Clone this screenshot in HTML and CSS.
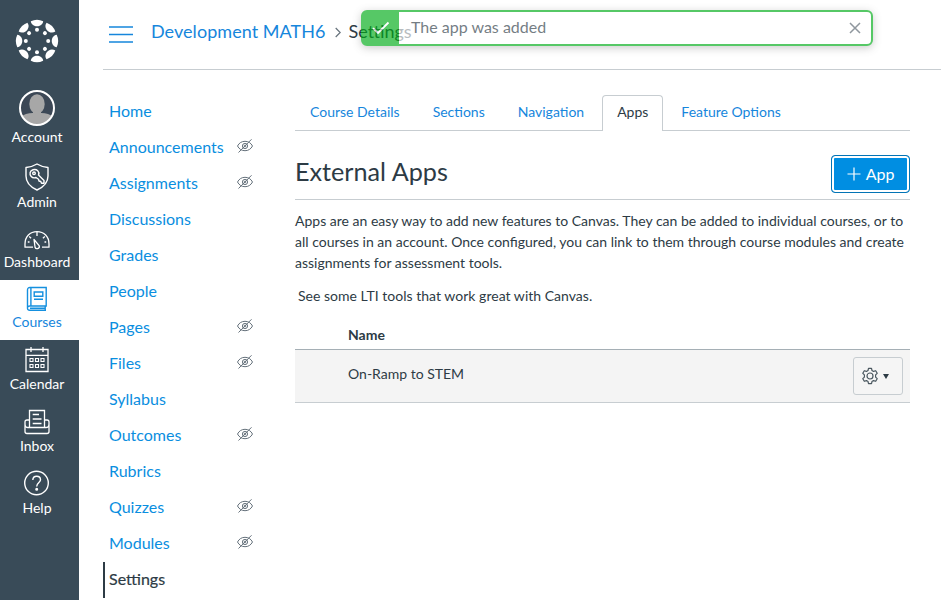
FILE: index.html
```html
<!DOCTYPE html>
<html lang="en">
<head>
<meta charset="utf-8">
<title>Development MATH6 Settings</title>
<link rel="stylesheet" href="styles.css">
</head>
<body>
<svg width="0" height="0" class="defs" aria-hidden="true">
  <symbol id="hidden-eye" viewBox="0 0 18 16"><g fill="none" stroke="#66727c" stroke-width="1"><path d="M1.5 8Q4 3.3 9 3.3T16.500 8Q14 12.700 9 12.700T1.500 8Z"/><circle cx="9" cy="8" r="2.600"/><circle cx="9" cy="8" r=".8"/><path d="M2.500 14.500 15.500 1.300"/></g></symbol>
</svg>
<div class="app">
  <nav class="global-nav">
    <a class="logo"><svg width="44" height="44" viewBox="-22 -22 44 44" fill="#fff">
      <defs><g id="spoke"><path d="M-6.200-19.700Q0-22.700 6.200-19.700C5.300-13.100-5.300-13.100-6.200-19.700Z"/><circle cy="-11.200" r="2"/></g></defs>
      <use href="#spoke"/><use href="#spoke" transform="rotate(45)"/><use href="#spoke" transform="rotate(90)"/><use href="#spoke" transform="rotate(135)"/><use href="#spoke" transform="rotate(180)"/><use href="#spoke" transform="rotate(225)"/><use href="#spoke" transform="rotate(270)"/><use href="#spoke" transform="rotate(315)"/></svg></a>
    <a class="item account"><svg width="36" height="36" viewBox="0 0 36 36"><defs><clipPath id="face"><circle cx="18" cy="18" r="17"/></clipPath></defs><circle cx="18" cy="18" r="17" fill="#3c4856"/><g clip-path="url(#face)" fill="#a7a7a7"><ellipse cx="18" cy="14" rx="7.700" ry="9.800"/><path d="M14 20h8v3q8 0 12 4v9H2v-9q4-4 12-4z"/></g><circle cx="18" cy="18" r="17" fill="none" stroke="#fff" stroke-width="2"/></svg><span>Account</span></a>
    <a class="item admin"><svg width="26" height="28" viewBox="0 0 26 28" fill="none" stroke="#fff" stroke-width="1.400" stroke-linejoin="round"><path d="M13 1Q18 4 24 4.500V13Q24 22 13 27Q2 22 2 13V4.500Q8 4 13 1Z"/><path d="M14.500 12 20 17.500V20.300H17.500L16.800 18.500 15 18 14.500 16.300 12 14.500Q9 15.500 7.200 13.500C5 11 6 7.500 9 6.700C13 5.800 15.800 8.500 14.500 12Z"/><circle cx="10" cy="10.300" r="1.300"/></svg><span>Admin</span></a>
    <a class="item"><svg width="26" height="21" viewBox="0 0 26 21" fill="none" stroke="#fff" stroke-width="1.300" stroke-linejoin="round"><path d="M9 17.200H1V14C1 6.500 6 1.700 13 1.700S25 6.500 25 14V17.200H18"/><path d="M13 2v4M5.200 6.500l1.900 1.700M20.800 6.500l-1.900 1.700M3.800 12h1.700M20.500 12h1.700M10 9.500l1.100 8q.6 1.500 2.500 1.100 2.200-.7 1.700-2.700Z"/></svg><span>Dashboard</span></a>
    <a class="item active"><svg width="22" height="26" viewBox="0 -1 22 26" fill="none" stroke="#1590df" stroke-width="1.400"><path d="M4 1.500H20.200V20H4Q1.500 20 1.500 22.200T4 24.300H20M1.500 22.500V4Q1.500 1.500 4 1.500M4.900 2V20M19.200 20v4M4 22.200H19M8.200 6H16.800V10.300H8.200ZM8 13.300H17"/></svg><span>Courses</span></a>
    <a class="item"><svg width="24" height="27" viewBox="0 0 24 27" fill="none" stroke="#fff" stroke-width="1.300"><path d="M1 3.500H23V25.500H1ZM1 9.300H23M6 1V6M18 1V6"/><path stroke-width="1.100" d="M5 12.500h3v3H5zM10.500 12.500h3v3h-3zM16 12.500h3v3h-3zM5 18.500h3v3H5zM10.500 18.500h3v3h-3zM16 18.500h3v3h-3z"/></svg><span>Calendar</span></a>
    <a class="item"><svg width="26" height="27" viewBox="0 -1 26 27" fill="none" stroke="#fff" stroke-width="1.300"><path d="M5.500 18.500V1.500H20.500V18.500M5 11H3Q1 11 1 13V22.500Q1 24.500 3 24.500H23Q25 24.500 25 22.500V13Q25 11 23 11H21M1 15Q1 18.500 4 18.500H22Q25 18.500 25 15M8.700 5.500H15M8.700 10H17.500M8.700 14.500H17.500"/></svg><span>Inbox</span></a>
    <a class="item"><svg width="26" height="28" viewBox="0 -1 26 28" fill="none" stroke="#fff" stroke-width="1.400"><circle cx="12.500" cy="13" r="11.800"/><path d="M8.800 10Q9 6.300 12.700 6.300T16.500 9.800C16.500 12.500 12.700 12.500 12.700 16.500"/><circle cx="12.700" cy="19.300" r=".8" fill="#fff"/></svg><span>Help</span></a>
  </nav>
  <div class="page">
    <header class="crumbs">
      <svg width="24" height="17" viewBox="0 0 24 17" stroke="#1686dc" stroke-width="1.500"><path d="M0 1H24M0 8.500H24M0 16H24"/></svg>
      <a class="course">Development MATH6</a>
      <svg class="chevron" width="6" height="11" viewBox="0 0 6 11" fill="none" stroke="#66727c" stroke-width="1.200"><path d="M.7 1 5.200 5.500.7 10"/></svg>
      <span>Settings</span>
    </header>
    <div class="body">
      <nav class="course-nav">
        <a>Home</a>
        <a>Announcements<svg><use href="#hidden-eye"/></svg></a>
        <a>Assignments<svg><use href="#hidden-eye"/></svg></a>
        <a>Discussions</a>
        <a>Grades</a>
        <a>People</a>
        <a>Pages<svg><use href="#hidden-eye"/></svg></a>
        <a>Files<svg><use href="#hidden-eye"/></svg></a>
        <a>Syllabus</a>
        <a>Outcomes<svg><use href="#hidden-eye"/></svg></a>
        <a>Rubrics</a>
        <a>Quizzes<svg><use href="#hidden-eye"/></svg></a>
        <a>Modules<svg><use href="#hidden-eye"/></svg></a>
        <a class="current">Settings</a>
      </nav>
      <main>
        <div class="tabs"><a>Course Details</a><a>Sections</a><a>Navigation</a><a class="selected">Apps</a><a>Feature Options</a></div>
        <div class="heading"><h2>External Apps</h2><button class="add"><svg width="14" height="14" viewBox="0 0 14 14" stroke="#fff" stroke-width="1.200"><path d="M7 .5V13.500M.5 7H13.500"/></svg><span>App</span></button></div>
        <p>Apps are an easy way to add new features to Canvas. They can be added to individual courses, or to<br>all courses in an account. Once configured, you can link to them through course modules and create<br>assignments for assessment tools.</p>
        <p class="see">See some LTI tools that work great with Canvas.</p>
        <div class="table">
          <div class="thead">Name</div>
          <div class="row"><span>On-Ramp to STEM</span><button class="gear"><svg width="18" height="18" viewBox="0 0 18 18" fill="none" stroke="#4b5860" stroke-width="1.200" stroke-linejoin="round"><path d="M7.500 1.300h3l.5 2.200 1.500.9 2.200-.7 1.500 2.600-1.600 1.600v2.200l1.600 1.600-1.500 2.600-2.200-.7-1.500.9-.5 2.200h-3L7 14.500l-1.500-.9-2.200.7-1.500-2.600 1.600-1.600V7.900L1.800 6.300l1.500-2.600 2.200.7L7 3.500Z"/><circle cx="9" cy="9" r="3"/></svg><i class="caret"></i></button></div>
        </div>
      </main>
    </div>
  </div>
  <div class="toast"><div class="tick"><svg width="18" height="14" viewBox="0 0 18 14" fill="none" stroke="#fff" stroke-width="1.800"><path d="M1 7.200 6 12 16.500 1.500"/></svg></div><span>The app was added</span><svg class="close" width="12" height="12" viewBox="0 0 12 12" stroke="#56626d" stroke-width="1.500"><path d="M1 1 11 11M11 1 1 11"/></svg></div>
</div>
</body>
</html>
```
FILE: styles.css
```css
* { box-sizing: border-box; }
body { margin: 0; font-family: Lato, "Liberation Sans", sans-serif; font-size: 14px; color: #2d3b45; background: #fff; overflow: hidden; }
.defs { position: absolute; }
.app { display: flex; height: 600px; overflow: hidden; }
.global-nav { width: 79px; flex: none; background: #394b58; color: #fff; display: flex; flex-direction: column; }
.logo { height: 80px; padding: 19px 0 0 15px; }
.item { height: 62px; padding: 0 5px 9px 0; display: flex; flex-direction: column; align-items: center; justify-content: flex-end; gap: 2px; line-height: 18px; flex: none; }
.account { height: 75px; }
.admin { height: 65px; }
.admin + .item, .active { height: 60px; }
.active { background: #fff; color: #1686dc; }
.page { flex: 1; min-width: 0; padding-left: 24px; }
.crumbs { height: 70px; border-bottom: 1px solid #c7cdd1; display: flex; align-items: center; padding: 0 0 7px 6px; font-size: 18px; }
.crumbs > svg:first-child { margin-top: 6px; }
.course { color: #1686dc; margin-left: 18px; letter-spacing: .05px; }
.chevron { margin: 3px 8px 0 9px; }
.body { display: flex; }
.course-nav { width: 192px; flex: none; padding-top: 24px; }
.course-nav a { display: flex; align-items: center; justify-content: space-between; height: 36px; padding: 0 41px 4px 6px; font-size: 16px; color: #0a8ee0; }
.course-nav svg { width: 18px; height: 16px; }
.course-nav .current { color: #2d3b45; border-left: 2px solid #2d3b45; padding-left: 4px; -webkit-text-stroke: .2px #2d3b45; }
main { width: 615px; padding-top: 25px; }
.tabs { height: 36px; display: flex; border-bottom: 1px solid #c7cdd1; color: #1686dc; }
.tabs a { height: 36px; padding: 0 15px; line-height: 34px; margin-right: 3px; border: 0 solid #c7cdd1; white-space: nowrap; }
.tabs .selected { color: #2d3b45; background: #fff; border-width: 1px 1px 0; border-radius: 4px 4px 0 0; padding: 0 14px; line-height: 32px; }
.heading { height: 69px; border-bottom: 1px solid #c7cdd1; display: flex; justify-content: space-between; padding-top: 24px; }
h2 { margin: 0; font-weight: 400; font-size: 25.2px; line-height: 32px; }
button { font: inherit; color: inherit; margin: 0; }
.add { width: 79px; height: 38px; border: 1px solid #0374b5; border-radius: 4px; background: #008ee2; box-shadow: inset 0 0 0 2px #fff; color: #fff; font-size: 16px; display: flex; align-items: center; justify-content: center; gap: 5px; padding: 0; }
.add span { padding-bottom: 2px; }
p { margin: 10px 0 12px; line-height: 21px; white-space: nowrap; }
.see { margin: 0; padding-left: 3px; letter-spacing: .02px; }
.thead { height: 44px; padding: 17px 0 0 53px; font-weight: 700; line-height: 24px; border-bottom: 1px solid #a5afb5; }
.row { height: 53px; background: #f4f4f4; border-bottom: 1px solid #c7cdd1; display: flex; justify-content: space-between; padding: 7px 7px 0 53px; line-height: 34px; }
.gear { width: 50px; height: 38px; background: #f5f5f5; border: 1px solid #c7cdd1; border-radius: 3px; padding: 0 6px 0 0; display: flex; align-items: center; justify-content: center; gap: 4px; }
.caret { border: 3.5px solid transparent; border-top: 5px solid #2d3b45; border-bottom: 0; }
.toast { position: absolute; left: 361px; top: 10px; width: 512px; height: 36px; border: 2px solid #00ac18; border-radius: 6px; background: #fff; opacity: .66; display: flex; align-items: center; font-size: 16px; box-shadow: 0 2px 8px rgba(0,0,0,.3); }
.tick { width: 36px; height: 32px; background: #00ac18; display: flex; align-items: center; justify-content: center; }
.toast span { margin-left: 12px; padding-bottom: 3px; }
.close { margin-left: auto; margin-right: 10px; }
```
